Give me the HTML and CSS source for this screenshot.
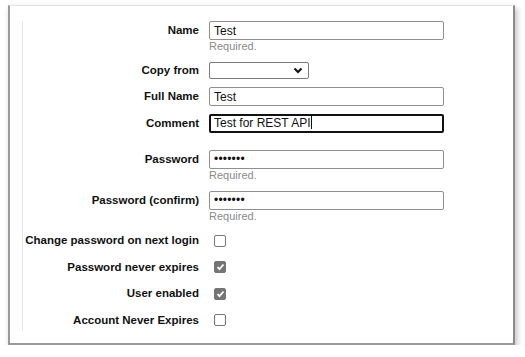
FILE: index.html
```html
<!DOCTYPE html>
<html lang="en">
<head>
    <meta charset="UTF-8">
    <title>Edit User</title>
    <link rel="stylesheet" href="styles.css">
</head>
<body>
    <div class="frame">
        <div class="panel">
            <div class="row">
                <label class="label">Name</label>
                <div class="field">
                    <input class="text" type="text" value="Test">
                    <div class="hint">Required.</div>
                </div>
            </div>
            <div class="row row-select">
                <label class="label">Copy from</label>
                <div class="field">
                    <div class="select"><svg width="10" height="7" viewBox="0 0 10 7"><path d="M1.5 1.5 L5 5 L8.5 1.5" fill="none" stroke="#111" stroke-width="2"/></svg></div>
                </div>
            </div>
            <div class="row">
                <label class="label">Full Name</label>
                <div class="field">
                    <input class="text" type="text" value="Test">
                </div>
            </div>
            <div class="row row-comment">
                <label class="label">Comment</label>
                <div class="field">
                    <div class="text focused">Test for REST API<span class="caret"></span></div>
                </div>
            </div>
            <div class="row">
                <label class="label">Password</label>
                <div class="field">
                    <div class="text dots">&bull;&bull;&bull;&bull;&bull;&bull;&bull;</div>
                    <div class="hint">Required.</div>
                </div>
            </div>
            <div class="row">
                <label class="label">Password (confirm)</label>
                <div class="field">
                    <div class="text dots">&bull;&bull;&bull;&bull;&bull;&bull;&bull;</div>
                    <div class="hint">Required.</div>
                </div>
            </div>
            <div class="checks">
                <div class="check-row">
                    <span class="label">Change password on next login</span>
                    <span class="box"></span>
                </div>
                <div class="check-row">
                    <span class="label">Password never expires</span>
                    <span class="box checked"><svg width="9" height="8" viewBox="0 0 9 8"><path d="M1.5 4.2 L3.5 6.2 L7.5 1.5" fill="none" stroke="#fff" stroke-width="1.8"/></svg></span>
                </div>
                <div class="check-row">
                    <span class="label">User enabled</span>
                    <span class="box checked"><svg width="9" height="8" viewBox="0 0 9 8"><path d="M1.5 4.2 L3.5 6.2 L7.5 1.5" fill="none" stroke="#fff" stroke-width="1.8"/></svg></span>
                </div>
                <div class="check-row">
                    <span class="label">Account Never Expires</span>
                    <span class="box"></span>
                </div>
            </div>
        </div>
    </div>
</body>
</html>
```

FILE: styles.css
```css
body {
    margin: 0;
    background: #fff;
    font-family: "Liberation Sans", Arial, sans-serif;
    color: #111;
}
.frame {
    box-sizing: border-box;
    margin: 5px 0 0 8px;
    width: 507px;
    height: 340px;
    background: #fff;
    border-top: 1px solid #e4e4e4;
    border-left: 2px solid #9a9a9a;
    border-right: 2px solid #8c8c8c;
    border-bottom: 2px solid #9a9a9a;
    box-shadow: 2px 3px 6px rgba(0, 0, 0, 0.25);
    padding: 15px 0 0 12px;
}
.panel {
    border-left: 1px solid #e6e6e6;
    height: 310px;
}
.row {
    display: flex;
    align-items: flex-start;
    margin-bottom: 8px;
}
.label {
    width: 176px;
    text-align: right;
    font-weight: bold;
    font-size: 11.5px;
    color: #111;
    padding-right: 10px;
    flex: none;
    line-height: 19px;
}
.field {
    display: flex;
    flex-direction: column;
}
.text {
    box-sizing: border-box;
    width: 235px;
    height: 19px;
    margin: 0;
    padding: 0 4px;
    border: 1px solid #8f8f8f;
    border-radius: 2px;
    font-family: "Liberation Sans", Arial, sans-serif;
    font-size: 12px;
    line-height: 17px;
    color: #111;
    background: #fff;
    outline: none;
}
.text.focused {
    border: 2px solid #111;
    padding: 0 3px;
    line-height: 15px;
}
.caret {
    display: inline-block;
    width: 1px;
    height: 13px;
    background: #111;
    vertical-align: -2px;
    margin-left: 1px;
}
.text.dots {
    font-size: 12px;
    letter-spacing: 0.2px;
}
.hint {
    font-size: 11px;
    color: #8a8a8a;
    line-height: 13px;
    margin-bottom: 1px;
}
.row-select {
    margin-top: 1px;
}
.row-select .label {
    line-height: 17px;
}
.select {
    box-sizing: border-box;
    width: 100px;
    height: 17px;
    border: 1px solid #7a7a7a;
    border-radius: 2px;
    display: flex;
    justify-content: flex-end;
    align-items: center;
    padding-right: 5px;
}
.row-comment {
    margin-bottom: 17px;
}
.checks {
    margin-top: 10px;
    display: flex;
    flex-direction: column;
    gap: 13.5px;
}
.check-row {
    display: flex;
    align-items: center;
}
.check-row .label {
    line-height: 13px;
    padding-right: 15px;
}
.box {
    box-sizing: border-box;
    width: 12px;
    height: 12px;
    border: 1px solid #777;
    border-radius: 2px;
    display: flex;
    align-items: center;
    justify-content: center;
}
.box.checked {
    background: #757575;
    border-color: #757575;
}
```
